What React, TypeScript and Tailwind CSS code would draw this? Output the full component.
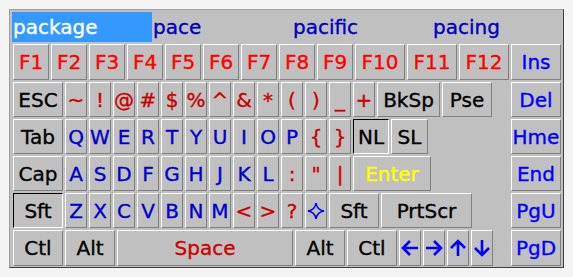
import React from "react";

type Key = {
  label: React.ReactNode;
  w: number;
  color: string;
  down?: boolean; // toggled keys (NL, left Sft)
};

const RED = "text-[#ff0000]";
const SYM = "text-[#cc0000]";
const LET = "text-[#0000cc]";
const NAV = "text-[#0000ff]";
const BLK = "text-black";

function Star() {
  return (
    <svg width="18" height="18" viewBox="0 0 18 18">
      <path
        d="M9 1 Q10 8 17 9 Q10 10 9 17 Q8 10 1 9 Q8 8 9 1 Z"
        fill="none"
        stroke="#0000ff"
        strokeWidth="1.6"
      />
    </svg>
  );
}

// heavy arrow, drawn pointing right and rotated
function Arrow({ deg }: { deg: number }) {
  return (
    <svg width="20" height="20" viewBox="0 0 20 20" style={{ transform: `rotate(${deg}deg)` }}>
      <path
        d="M2 10 H17 M10 3 L17 10 L10 17"
        fill="none"
        stroke="#0000ff"
        strokeWidth="2.6"
        strokeLinejoin="miter"
      />
    </svg>
  );
}

const small = (s: React.ReactNode, color: string): Key => ({ label: s, w: 22, color });

const rows: { keys: Key[]; nav: string; h: string }[] = [
  {
    h: "h-[36px]",
    nav: "Ins",
    keys: [
      ...["F1", "F2", "F3", "F4", "F5", "F6", "F7", "F8", "F9"].map((f) => ({
        label: f,
        w: 36,
        color: RED,
      })),
      { label: "F10", w: 50, color: RED },
      { label: "F11", w: 50, color: RED },
      { label: "F12", w: 50, color: RED },
    ],
  },
  {
    h: "h-[35px]",
    nav: "Del",
    keys: [
      { label: "ESC", w: 50, color: BLK },
      ...["~", "!", "@", "#", "$", "%", "^", "&", "*", "(", ")", "_", "+"].map((s) =>
        small(s, SYM)
      ),
      { label: "BkSp", w: 63, color: BLK },
      { label: "Pse", w: 50, color: BLK },
    ],
  },
  {
    h: "h-[35px]",
    nav: "Hme",
    keys: [
      { label: "Tab", w: 50, color: BLK },
      ...["Q", "W", "E", "R", "T", "Y", "U", "I", "O", "P"].map((s) => small(s, LET)),
      small("{", SYM),
      small("}", SYM),
      { label: "NL", w: 36, color: BLK, down: true },
      { label: "SL", w: 37, color: BLK },
    ],
  },
  {
    h: "h-[35px]",
    nav: "End",
    keys: [
      { label: "Cap", w: 50, color: BLK },
      ...["A", "S", "D", "F", "G", "H", "J", "K", "L"].map((s) => small(s, LET)),
      small(":", SYM),
      small("\"", SYM),
      small("|", SYM),
      { label: "Enter", w: 78, color: "text-[#ffff00]" },
    ],
  },
  {
    h: "h-[35px]",
    nav: "PgU",
    keys: [
      { label: "Sft", w: 50, color: BLK, down: true },
      ...["Z", "X", "C", "V", "B", "N", "M"].map((s) => small(s, LET)),
      small("<", SYM),
      small(">", SYM),
      small("?", SYM),
      small(<Star />, NAV),
      { label: "Sft", w: 50, color: BLK },
      { label: "PrtScr", w: 91, color: BLK },
    ],
  },
  {
    h: "h-[36px]",
    nav: "PgD",
    keys: [
      { label: "Ctl", w: 50, color: BLK },
      { label: "Alt", w: 50, color: BLK },
      { label: "Space", w: 176, color: SYM },
      { label: "Alt", w: 50, color: BLK },
      { label: "Ctl", w: 50, color: BLK },
      small(<Arrow deg={180} />, NAV),
      small(<Arrow deg={0} />, NAV),
      small(<Arrow deg={-90} />, NAV),
      small(<Arrow deg={90} />, NAV),
    ],
  },
];

function KeyCap({ k }: { k: Key }) {
  const edge = k.down
    ? "border-t-black border-l-black border-r-white border-b-white"
    : "border-t-white border-l-white border-r-[#808080] border-b-[#808080]";
  return (
    <div
      className={`flex h-full shrink-0 items-center justify-center border bg-[#c0c0c0] [-webkit-text-stroke:0.35px_currentColor] ${edge} ${k.color}`}
      style={{ width: k.w }}
    >
      {k.label}
    </div>
  );
}

const suggestions = ["package", "pace", "pacific", "pacing"];

export default function App() {
  return (
    <div
      className="h-[277px] w-[573px] bg-[#f4f4f4] pl-[9px] pt-[9px]"
      style={{ fontFamily: '"DejaVu Sans", Verdana, sans-serif' }}
    >
      <div className="h-[259px] w-[555px] overflow-hidden border border-t-[#a0a0a0] border-l-[#a0a0a0] border-r-[#404040] border-b-[#404040] bg-[#c0c0c0]">
        {/* word suggestions */}
        <div className="ml-[2px] mt-[2px] flex h-[30px] text-[20px] leading-none [-webkit-text-stroke:0.35px_currentColor]">
          {suggestions.map((s, i) => (
            <div
              key={s}
              className={`flex w-[140px] shrink-0 items-center pl-[1px] ${
                i === 0 ? "bg-[#3399ff] text-white" : "text-[#0000c0]"
              }`}
            >
              {s}
            </div>
          ))}
        </div>

        {/* keyboard */}
        <div className="ml-[3px] mt-[2px] flex flex-col gap-[2px] text-[20px] leading-none">
          {rows.map((r, i) => (
            <div key={i} className={`flex ${r.h}`}>
              <div className="flex w-[496px] gap-[2px]">
                {r.keys.map((k, j) => (
                  <KeyCap key={j} k={k} />
                ))}
              </div>
              <div className="ml-[2px]">
                <KeyCap k={{ label: r.nav, w: 50, color: NAV }} />
              </div>
            </div>
          ))}
        </div>
      </div>
    </div>
  );
}
